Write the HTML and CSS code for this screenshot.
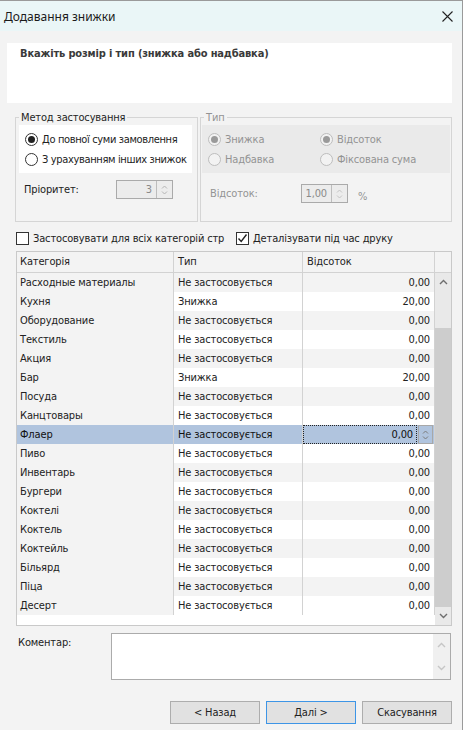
FILE: index.html
```html
<!doctype html>
<html>
<head>
    <title>Додавання знижки</title>
    <meta charset="utf-8" />
    <link rel="stylesheet" href="styles.css">
</head>
<body>
<div class="window">
    <div class="titlebar">
        <span>Додавання знижки</span>
        <svg class="close" width="11" height="11" viewBox="0 0 11 11"><path d="M0.5 0.5 L10.5 10.5 M10.5 0.5 L0.5 10.5" stroke="#222" stroke-width="1.1" fill="none"/></svg>
    </div>

    <div class="banner">Вкажіть розмір і тип (знижка або надбавка)</div>

    <div class="groups">
        <fieldset class="group method">
            <legend>Метод застосування</legend>
            <div class="options">
                <label class="radio on"><i></i>До повної суми замовлення</label>
                <label class="radio"><i></i>З урахуванням інших знижок</label>
            </div>
            <div class="field prio">
                <span class="lbl">Пріоритет:</span>
                <div class="spin"><span class="val">3</span><span class="btns"><svg width="7" height="12" viewBox="0 0 7 12"><path d="M1 4.5 L3.5 2 L6 4.5 M1 7.5 L3.5 10 L6 7.5" stroke="#b4b4b4" fill="none"/></svg></span></div>
            </div>
        </fieldset>
        <fieldset class="group type off">
            <legend>Тип</legend>
            <div class="options grid2">
                <label class="radio on"><i></i>Знижка</label>
                <label class="radio on"><i></i>Відсоток</label>
                <label class="radio"><i></i>Надбавка</label>
                <label class="radio"><i></i>Фіксована сума</label>
            </div>
            <div class="field pct">
                <span class="lbl">Відсоток:</span>
                <div class="spin"><span class="val">1,00</span><span class="btns"><svg width="7" height="12" viewBox="0 0 7 12"><path d="M1 4.5 L3.5 2 L6 4.5 M1 7.5 L3.5 10 L6 7.5" stroke="#c4c4c4" fill="none"/></svg></span></div>
                <span class="unit">%</span>
            </div>
        </fieldset>
    </div>

    <div class="checks">
        <label class="check"><i></i>Застосовувати для всіх категорій стр</label>
        <label class="check on"><i><svg width="11" height="11" viewBox="0 0 11 11"><path d="M1.5 5.5 L4.2 8.5 L9.5 1.5" stroke="#222" stroke-width="1.4" fill="none"/></svg></i>Деталізувати під час друку</label>
    </div>

    <div class="table">
        <div class="thead">
            <span>Категорія</span><span>Тип</span><span>Відсоток</span><span></span>
        </div>
        <div class="tbody">
            <div class="cols">
                <div class="row"><span>Расходные материалы</span><span>Не застосовується</span><span class="num">0,00</span></div>
                <div class="row"><span>Кухня</span><span>Знижка</span><span class="num">20,00</span></div>
                <div class="row"><span>Оборудование</span><span>Не застосовується</span><span class="num">0,00</span></div>
                <div class="row"><span>Текстиль</span><span>Не застосовується</span><span class="num">0,00</span></div>
                <div class="row"><span>Акция</span><span>Не застосовується</span><span class="num">0,00</span></div>
                <div class="row"><span>Бар</span><span>Знижка</span><span class="num">20,00</span></div>
                <div class="row"><span>Посуда</span><span>Не застосовується</span><span class="num">0,00</span></div>
                <div class="row"><span>Канцтовары</span><span>Не застосовується</span><span class="num">0,00</span></div>
                <div class="row sel"><span>Флаер</span><span>Не застосовується</span><span class="num edit"><em>0,00</em><b><svg width="7" height="12" viewBox="0 0 7 12"><path d="M1 4.5 L3.5 2 L6 4.5 M1 7.5 L3.5 10 L6 7.5" stroke="#7c7c7c" fill="none"/></svg></b></span></div>
                <div class="row"><span>Пиво</span><span>Не застосовується</span><span class="num">0,00</span></div>
                <div class="row"><span>Инвентарь</span><span>Не застосовується</span><span class="num">0,00</span></div>
                <div class="row"><span>Бургери</span><span>Не застосовується</span><span class="num">0,00</span></div>
                <div class="row"><span>Коктелі</span><span>Не застосовується</span><span class="num">0,00</span></div>
                <div class="row"><span>Коктель</span><span>Не застосовується</span><span class="num">0,00</span></div>
                <div class="row"><span>Коктейль</span><span>Не застосовується</span><span class="num">0,00</span></div>
                <div class="row"><span>Більярд</span><span>Не застосовується</span><span class="num">0,00</span></div>
                <div class="row"><span>Піца</span><span>Не застосовується</span><span class="num">0,00</span></div>
                <div class="row"><span>Десерт</span><span>Не застосовується</span><span class="num">0,00</span></div>
            </div>
            <div class="vscroll">
                <div class="arrow"><svg width="9" height="6" viewBox="0 0 9 6"><path d="M1 5 L4.5 1.5 L8 5" stroke="#6e6e6e" stroke-width="1.4" fill="none"/></svg></div>
                <div class="track"></div>
                <div class="thumb"></div>
                <div class="arrow"><svg width="9" height="6" viewBox="0 0 9 6"><path d="M1 1 L4.5 4.5 L8 1" stroke="#6e6e6e" stroke-width="1.4" fill="none"/></svg></div>
            </div>
        </div>
    </div>

    <div class="comment">
        <span class="lbl">Коментар:</span>
        <div class="memo">
            <div class="memo-scroll">
                <svg width="9" height="6" viewBox="0 0 9 6"><path d="M1 5 L4.5 1.5 L8 5" stroke="#c6c6c6" stroke-width="1.4" fill="none"/></svg>
                <svg width="9" height="6" viewBox="0 0 9 6"><path d="M1 1 L4.5 4.5 L8 1" stroke="#c6c6c6" stroke-width="1.4" fill="none"/></svg>
            </div>
        </div>
    </div>

    <div class="buttons">
        <button>&lt; Назад</button>
        <button class="default">Далі &gt;</button>
        <button>Скасування</button>
    </div>
</div>
</body>
</html>
```

FILE: styles.css
```css
body          { margin:0; background-color:#f3f3f3; color:#222; font-family:"DejaVu Sans Condensed", "Liberation Sans", sans-serif; font-size:11px; letter-spacing:-0.15px; }
.window       { width:463px; height:730px; box-sizing:border-box; border-top:1px solid #9a9a9a; border-right:1px solid #9a9a9a; }

.titlebar     { height:30px; background-color:#eaf6f7; display:flex; align-items:center; justify-content:space-between; padding:0 9px 0 4px; font-family:"Noto Sans", sans-serif; font-size:12px; letter-spacing:0; color:#1b1b1b; }
.close        { margin-top:1px; }

.banner       { margin:12px 10px 0 7px; height:60px; box-sizing:border-box; padding:4px 13px; background-color:#fff; font-weight:bold; color:#3a3a3a; line-height:14px; }

.groups       { display:flex; gap:2px; margin:8px 10px 0 15px; }
.group        { margin:0; border:1px solid #d5d5d5; }
.group legend { padding:0 2px; line-height:13px; color:#1e1e1e; }
.method       { width:183px; box-sizing:border-box; padding:0 5px 22px 3px; }
.method .radio { letter-spacing:-0.35px; }
.type         { flex:1; padding:0 1px 0 1px; }
.type legend  { margin-left:2px; }
.off, .off legend { color:#939393; }

.options      { margin-top:1px; height:48px; box-sizing:border-box; padding:4px 0 4px 6px; background-color:#fff; }
.type .options { background-color:#eaeaea; }
.grid2        { display:grid; grid-template-columns:112px 1fr; }
.radio        { display:flex; align-items:center; height:20px; white-space:nowrap; }
.radio i      { width:11px; height:11px; border:1px solid #333; border-radius:50%; margin-right:4px; background-color:#fff; position:relative; flex:none; }
.radio.on i::after { content:""; position:absolute; left:2px; top:2px; width:7px; height:7px; border-radius:50%; background-color:#222; }
.off .radio i { border-color:#bdbdbd; background-color:#f2f2f2; }
.off .radio.on i::after { background-color:#9a9a9a; }

.field        { display:flex; align-items:center; }
.prio         { margin-top:7px; padding-left:5px; }
.prio .lbl    { width:92px; }
.pct          { margin-top:11px; padding-left:8px; }
.pct .lbl     { width:91px; }
.spin         { display:flex; height:19px; box-sizing:border-box; border:1px solid #aaa; background-color:#ececec; color:#8a8a8a; }
.prio .spin   { width:57px; }
.pct .spin    { width:47px; }
.spin .val    { flex:1; text-align:right; padding-right:4px; line-height:17px; }
.spin .btns   { width:15px; border-left:1px solid #bdbdbd; display:flex; align-items:center; justify-content:center; }
.unit         { margin-left:10px; padding-top:5px; }

.checks       { display:flex; margin:9px 0 0 16px; height:14px; }
.check        { display:flex; align-items:center; white-space:nowrap; }
.check:first-child { width:220px; }
.check i      { width:11px; height:11px; border:1px solid #333; background-color:#fff; margin-right:4px; display:flex; flex:none; }

.table        { margin:6px 10px 0 16px; height:375px; box-sizing:border-box; border:1px solid #c9c9c9; display:flex; flex-direction:column; }
.thead        { display:grid; grid-template-columns:157px 129px 132px 17px; height:20px; border-bottom:1px solid #d2d2d2; background-color:#f3f3f3; }
.thead span   { border-right:1px solid #d2d2d2; padding-left:3px; line-height:19px; }
.thead span:nth-child(2), .thead span:nth-child(3) { padding-left:4px; }
.thead span:last-child { border-right:0; }
.tbody        { flex:1; display:flex; }
.cols         { width:418px; background-color:#fff; }
.row          { display:grid; grid-template-columns:157px 129px 132px; height:19px; line-height:19px; }
.row span     { border-right:1px solid #d2d2d2; padding:0 4px; white-space:nowrap; overflow:hidden; }
.row span:first-child { padding-left:3px; background-color:#f3f3f3; }
.row:nth-child(odd) span { background-color:#f3f3f3; }
.num          { text-align:right; }
.row.sel span { background-color:#b0c4de; color:#111; }
.edit         { display:flex; padding:0 !important; }
.edit em      { flex:1; font-style:normal; border:1px dotted #222; text-align:right; padding-right:3px; line-height:17px; }
.edit b       { width:13px; margin:0 1px; border:1px solid #a8a8a8; display:flex; align-items:center; justify-content:center; font-weight:normal; }

.vscroll      { width:17px; display:flex; flex-direction:column; background-color:#e9e9e9; }
.arrow        { height:18px; display:flex; align-items:center; justify-content:center; }
.track        { height:37px; }
.thumb        { flex:1; background-color:#cdcdcd; }

.comment      { display:flex; margin:7px 11px 0 18px; }
.comment .lbl { width:93px; padding-top:3px; }
.memo         { flex:1; height:47px; box-sizing:border-box; border:1px solid #ababab; background-color:#fff; display:flex; justify-content:flex-end; }
.memo-scroll  { width:17px; background-color:#f0f0f0; display:flex; flex-direction:column; justify-content:space-between; align-items:center; padding:8px 0; box-sizing:border-box; }

.buttons      { display:flex; justify-content:flex-end; gap:6px; margin:21px 10px 0 0; }
button        { width:90px; height:23px; border:1px solid #adadad; background-color:#e1e1e1; font-family:"DejaVu Sans Condensed", "Liberation Sans", sans-serif; font-size:11px; letter-spacing:-0.15px; color:#222; padding:0; }
button.default { border-color:#3d95e6; }
```
